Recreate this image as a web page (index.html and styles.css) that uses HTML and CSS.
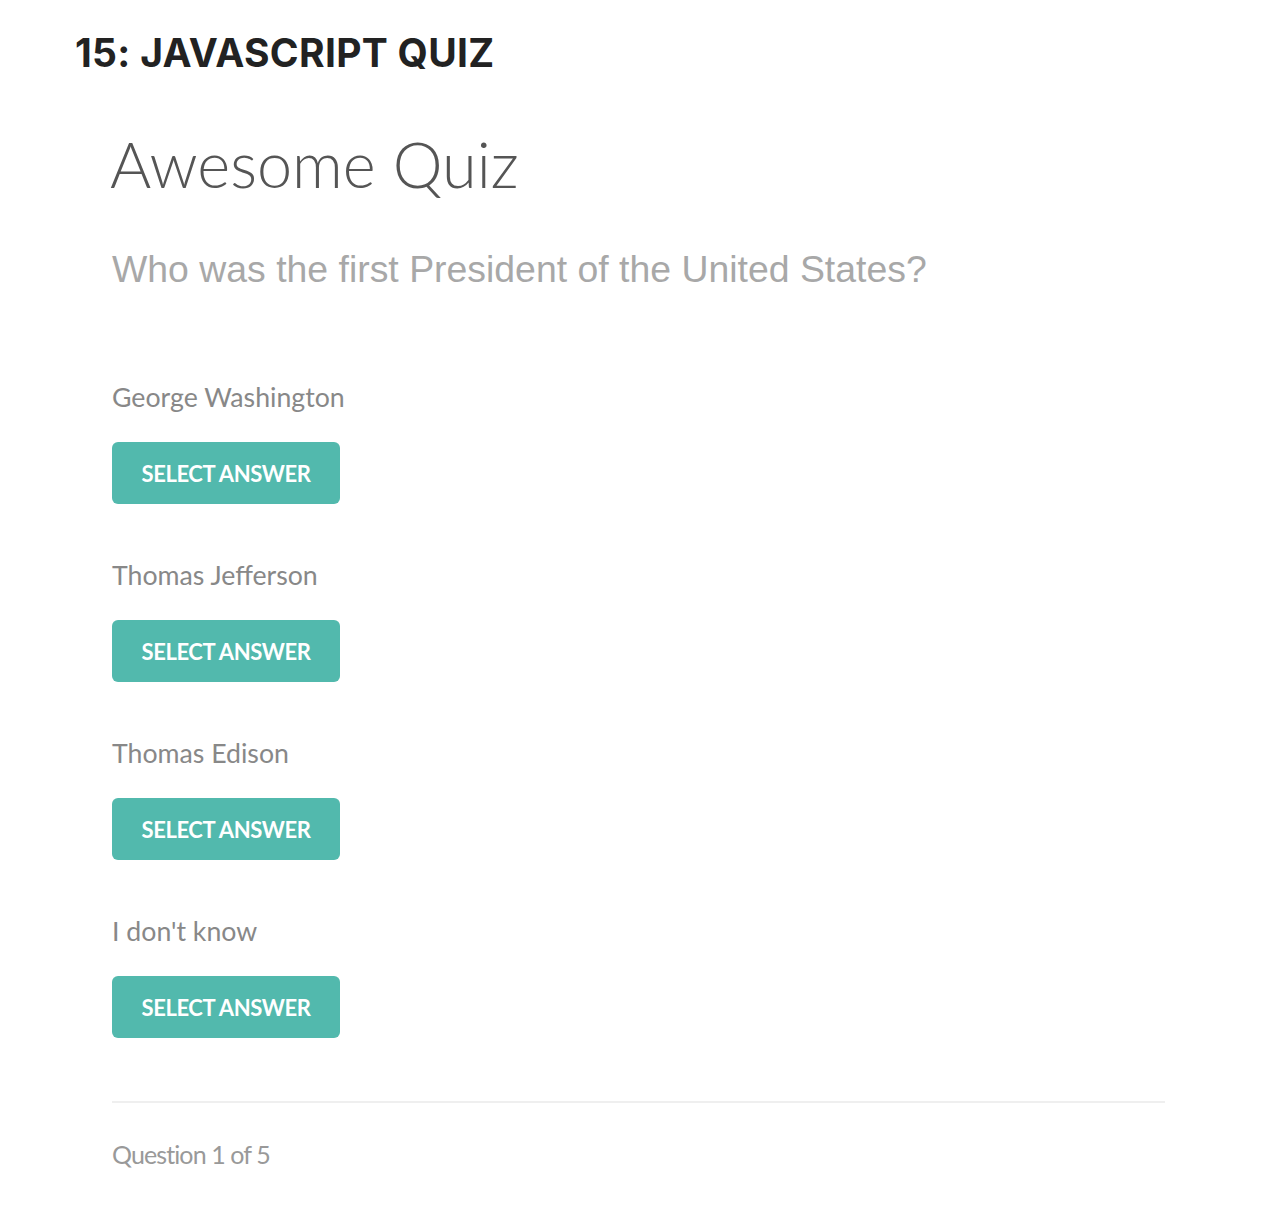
FILE: index.html
```html
<!DOCTYPE html>
<html>
<head>
<meta charset="utf-8">
<link rel="stylesheet" href="styles.css">
</head>
<body>
<h1 class="page-title">15: JAVASCRIPT QUIZ</h1>
<main class="quiz">
  <h2 class="quiz-title">Awesome Quiz</h2>
  <p class="question">Who was the first President of the United States?</p>
  <div class="answers">
    <div class="answer">
      <p class="answer-text">George Washington</p>
      <button class="select-btn">SELECT ANSWER</button>
    </div>
    <div class="answer">
      <p class="answer-text">Thomas Jefferson</p>
      <button class="select-btn">SELECT ANSWER</button>
    </div>
    <div class="answer">
      <p class="answer-text">Thomas Edison</p>
      <button class="select-btn">SELECT ANSWER</button>
    </div>
    <div class="answer">
      <p class="answer-text">I don't know</p>
      <button class="select-btn">SELECT ANSWER</button>
    </div>
  </div>
  <hr class="divider">
  <p class="progress">Question 1 of 5</p>
</main>
</body>
</html>
```
FILE: styles.css
```css
* { box-sizing: border-box; }
html, body { margin: 0; padding: 0; background: #fff; }
body { width: 1280px; height: 1218px; overflow: hidden; }

.page-title {
  margin: 0;
  padding: 30px 0 0 75px;
  font-family: Inter, "Open Sans", sans-serif;
  font-weight: 700;
  font-size: 39px;
  line-height: 46px;
  letter-spacing: 0.3px;
  color: #222;
}

.quiz {
  margin: 0 115px 0 112px;
  display: flex;
  flex-direction: column;
}

.quiz-title {
  margin: 48px 0 0 -2px;
  font-family: Lato, sans-serif;
  font-weight: 300;
  font-size: 63px;
  line-height: 80px;
  color: #555;
}

.question {
  margin: 43px 0 0 0;
  font-family: "Liberation Sans", Arial, sans-serif;
  font-weight: 400;
  font-size: 37.4px;
  line-height: 44px;
  color: #a8a8a8;
}

.answers {
  margin-top: 90px;
  display: flex;
  flex-direction: column;
  gap: 55px;
}

.answer {
  display: flex;
  flex-direction: column;
  align-items: flex-start;
}

.answer-text {
  margin: 0;
  font-family: Lato, sans-serif;
  font-size: 26.7px;
  line-height: 32px;
  color: #888;
}

.select-btn {
  margin-top: 29px;
  width: 228px;
  height: 62px;
  border: none;
  border-radius: 6px;
  background: #52b9ad;
  color: #fff;
  font-family: Lato, sans-serif;
  font-weight: 700;
  font-size: 22px;
  letter-spacing: -0.4px;
  padding: 0;
}

.divider {
  margin: 63px 0 0 0;
  border: none;
  height: 2px;
  background: #efefef;
}

.progress {
  margin: 35px 0 0 0;
  font-family: Lato, sans-serif;
  font-weight: 400;
  font-size: 25px;
  line-height: 32px;
  letter-spacing: -0.9px;
  color: #999;
}
```
